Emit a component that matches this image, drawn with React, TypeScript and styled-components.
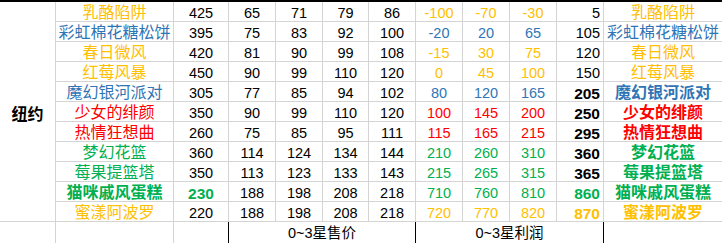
import React from 'react';
import styled, { createGlobalStyle, css } from 'styled-components';

const GOLD = '#ffc000';
const BLUE = '#2f75b5';
const RED = '#ff0000';
const GREEN = '#00b050';
const INK = '#000000';

const GlobalStyle = createGlobalStyle`
  body {
    margin: 0;
    background: #fff;
    font-family: 'Liberation Sans', 'Noto Sans CJK SC', sans-serif;
  }
`;

const Sheet = styled.div`
  display: grid;
  grid-template-columns: 55px 117px 54px 46px 46px 45px 46px 46px 46px 46px 46px 118px;
  grid-template-rows: repeat(11, 19px) 21px;
  gap: 1px;
  width: 722px;
  background: #d4d4d4;
  border-top: 2px solid #000;
`;

const Cell = styled.div`
  background: #fff;
  white-space: nowrap;
  overflow: hidden;
  box-sizing: border-box;
`;

const CityCell = styled(Cell)`
  grid-row: 1 / span 11;
  display: flex;
  align-items: center;
  justify-content: center;
  padding-top: 6px;
  font-size: 16px;
  line-height: 19px;
  font-weight: 700;
  color: ${INK};
`;

const NameCell = styled(Cell)<{ $color: string; $bold?: boolean }>`
  text-align: center;
  padding-top: 3px;
  font-size: 16px;
  line-height: 16px;
  color: ${(p) => p.$color};
  font-weight: ${(p) => (p.$bold ? 700 : 400)};
`;

const NumCell = styled(Cell)<{ $color?: string; $bold?: boolean; $right?: boolean }>`
  text-align: ${(p) => (p.$right ? 'right' : 'center')};
  padding: 4px ${(p) => (p.$right ? '3px' : '0')} 0 0;
  font-size: ${(p) => (p.$bold ? '15.5px' : '14.5px')};
  line-height: 15px;
  color: ${(p) => p.$color ?? INK};
  font-weight: ${(p) => (p.$bold ? 700 : 400)};
`;

const FooterCell = styled(Cell)<{ $span?: number; $edge?: boolean }>`
  text-align: center;
  padding-top: 4px;
  font-size: 14.5px;
  line-height: 15px;
  color: ${INK};
  grid-column: span ${(p) => p.$span ?? 1};
  ${(p) =>
    p.$edge &&
    css`
      box-shadow: -1px 0 0 #000;
    `}
`;

type Item = {
  name: string;
  color: string;
  base: number;
  prices: number[];
  profits: number[];
  total: number;
  nameBold?: boolean;
  baseBold?: boolean;
  tailBold?: boolean;
  totalBold?: boolean;
  totalColored?: boolean;
};

const items: Item[] = [
  { name: '乳酪陷阱', color: GOLD, base: 425, prices: [65, 71, 79, 86], profits: [-100, -70, -30], total: 5 },
  { name: '彩虹棉花糖松饼', color: BLUE, base: 395, prices: [75, 83, 92, 100], profits: [-20, 20, 65], total: 105 },
  { name: '春日微风', color: GOLD, base: 420, prices: [81, 90, 99, 108], profits: [-15, 30, 75], total: 120 },
  { name: '红莓风暴', color: GOLD, base: 450, prices: [90, 99, 110, 120], profits: [0, 45, 100], total: 150 },
  { name: '魔幻银河派对', color: BLUE, base: 305, prices: [77, 85, 94, 102], profits: [80, 120, 165], total: 205, tailBold: true, totalBold: true },
  { name: '少女的绯颜', color: RED, base: 350, prices: [90, 99, 110, 120], profits: [100, 145, 200], total: 250, tailBold: true, totalBold: true },
  { name: '热情狂想曲', color: RED, base: 260, prices: [75, 85, 95, 111], profits: [115, 165, 215], total: 295, tailBold: true, totalBold: true },
  { name: '梦幻花篮', color: GREEN, base: 360, prices: [114, 124, 134, 144], profits: [210, 260, 310], total: 360, tailBold: true, totalBold: true },
  { name: '莓果提篮塔', color: GREEN, base: 350, prices: [113, 123, 133, 143], profits: [215, 265, 315], total: 365, tailBold: true, totalBold: true },
  {
    name: '猫咪戚风蛋糕',
    color: GREEN,
    base: 230,
    prices: [188, 198, 208, 218],
    profits: [710, 760, 810],
    total: 860,
    nameBold: true,
    baseBold: true,
    tailBold: true,
    totalBold: true,
    totalColored: true,
  },
  {
    name: '蜜漾阿波罗',
    color: GOLD,
    base: 220,
    prices: [188, 198, 208, 218],
    profits: [720, 770, 820],
    total: 870,
    tailBold: true,
    totalBold: true,
    totalColored: true,
  },
];

const App = () => {
  return (
    <>
      <GlobalStyle />
      <Sheet>
        <CityCell>纽约</CityCell>
        {items.map((item) => (
          <React.Fragment key={item.name}>
            <NameCell $color={item.color} $bold={item.nameBold}>
              {item.name}
            </NameCell>
            <NumCell $bold={item.baseBold} $color={item.baseBold ? item.color : INK}>
              {item.base}
            </NumCell>
            {item.prices.map((price, i) => (
              <NumCell key={`p${i}`}>{price}</NumCell>
            ))}
            {item.profits.map((profit, i) => (
              <NumCell key={`r${i}`} $color={item.color}>
                {profit}
              </NumCell>
            ))}
            <NumCell $right $bold={item.totalBold} $color={item.totalColored ? item.color : INK}>
              {item.total}
            </NumCell>
            <NameCell $color={item.color} $bold={item.tailBold}>
              {item.name}
            </NameCell>
          </React.Fragment>
        ))}
        <FooterCell />
        <FooterCell />
        <FooterCell />
        <FooterCell $span={4} $edge>
          0~3星售价
        </FooterCell>
        <FooterCell $span={4} $edge>
          0~3星利润
        </FooterCell>
        <FooterCell $edge />
      </Sheet>
    </>
  );
};

export default App;
